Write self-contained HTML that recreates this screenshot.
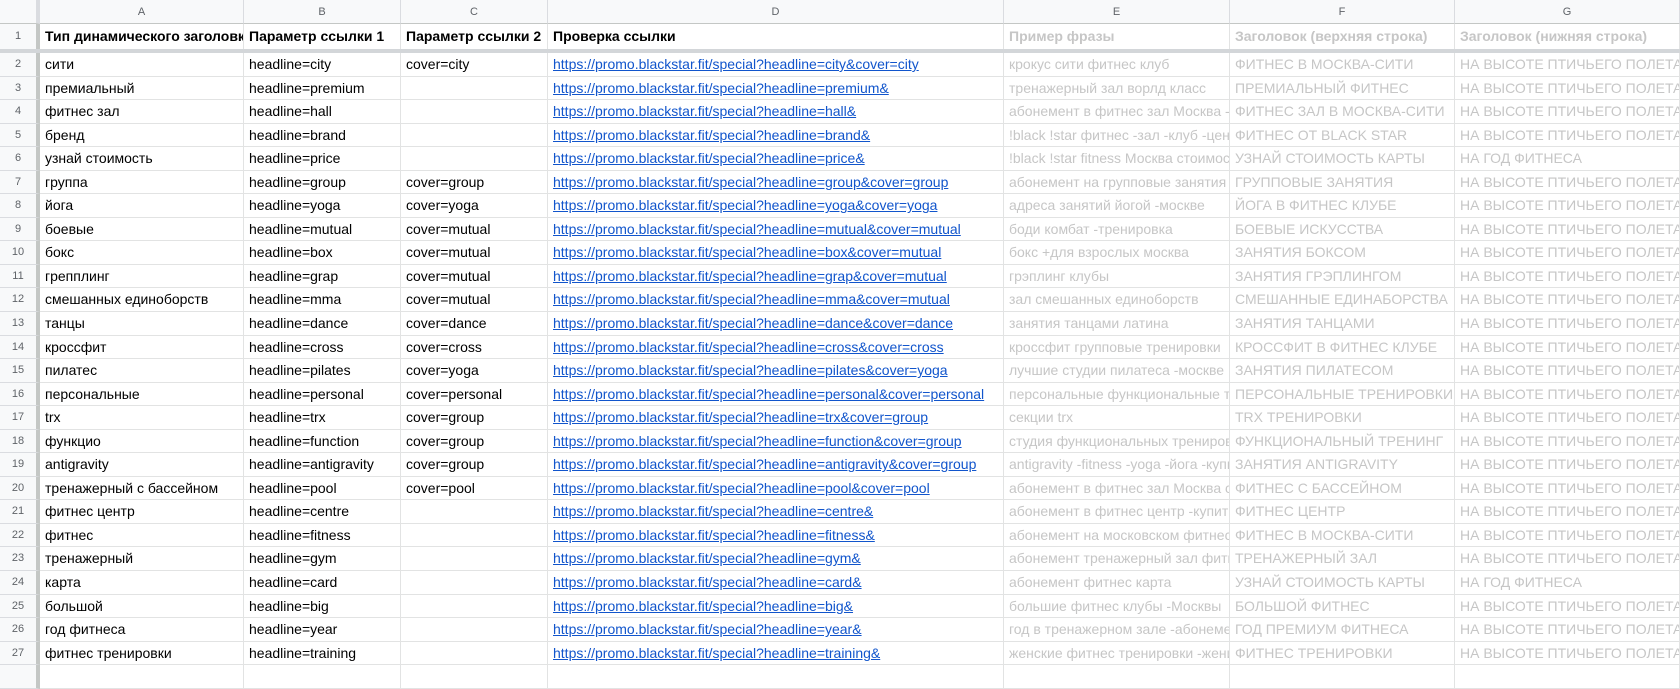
<!DOCTYPE html>
<html><head><meta charset="utf-8"><style>
*{margin:0;padding:0;box-sizing:border-box}
body{width:1680px;height:669px;overflow:hidden;background:#fff;font-family:"Liberation Sans",Arial,sans-serif;font-size:14px;color:#000}
.r{display:flex;height:23.55px;line-height:23px}
.r>div{border-right:1px solid #e2e3e3;border-bottom:1px solid #e2e3e3;white-space:nowrap;overflow:hidden;padding-left:5px;flex:none}
.r>div:nth-child(1){width:40px;padding:0;text-align:center;background:#f8f9fa;color:#5f6368;font-size:11px;border-right:4px solid #c4c7c5;border-bottom-color:#dadce0}
.r>div:nth-child(2){width:204px}
.r>div:nth-child(3){width:157px}
.r>div:nth-child(4){width:147px}
.r>div:nth-child(5){width:456px;color:#1155cc;text-decoration:underline}
.r>div:nth-child(6){width:226px;color:#c6c6c6}
.r>div:nth-child(7){width:225px;color:#c6c6c6}
.r>div:nth-child(8){width:225px;color:#c6c6c6}
.h{height:24px;line-height:24px}
.r.h>div{background:#f8f9fa;color:#5f6368;font-size:11px;text-align:center;padding:0;border-right-color:#dadce0;border-bottom-color:#c4c7c5;text-decoration:none}
.t{height:29px;line-height:25px;font-weight:bold;border-bottom:4px solid #d3d6d9}
.t>div{border-bottom:none}
.t>div:nth-child(1){font-weight:normal}
.r.t>div:nth-child(5){color:#000;text-decoration:none}
</style></head><body>
<div class="r h"><div></div><div>A</div><div>B</div><div>C</div><div>D</div><div>E</div><div>F</div><div>G</div></div>
<div class="r t"><div>1</div><div>Тип динамического заголовка</div><div>Параметр ссылки 1</div><div>Параметр ссылки 2</div><div>Проверка ссылки</div><div>Пример фразы</div><div>Заголовок (верхняя строка)</div><div>Заголовок (нижняя строка)</div></div>
<div class="r"><div>2</div><div>сити</div><div>headline=city</div><div>cover=city</div><div>https://promo.blackstar.fit/special?headline=city&amp;cover=city</div><div>крокус сити фитнес клуб</div><div>ФИТНЕС В МОСКВА-СИТИ</div><div>НА ВЫСОТЕ ПТИЧЬЕГО ПОЛЕТА</div></div>
<div class="r"><div>3</div><div>премиальный</div><div>headline=premium</div><div></div><div>https://promo.blackstar.fit/special?headline=premium&amp;</div><div>тренажерный зал ворлд класс</div><div>ПРЕМИАЛЬНЫЙ ФИТНЕС</div><div>НА ВЫСОТЕ ПТИЧЬЕГО ПОЛЕТА</div></div>
<div class="r"><div>4</div><div>фитнес зал</div><div>headline=hall</div><div></div><div>https://promo.blackstar.fit/special?headline=hall&amp;</div><div>абонемент в фитнес зал Москва -б</div><div>ФИТНЕС ЗАЛ В МОСКВА-СИТИ</div><div>НА ВЫСОТЕ ПТИЧЬЕГО ПОЛЕТА</div></div>
<div class="r"><div>5</div><div>бренд</div><div>headline=brand</div><div></div><div>https://promo.blackstar.fit/special?headline=brand&amp;</div><div>!black !star фитнес -зал -клуб -цент</div><div>ФИТНЕС ОТ BLACK STAR</div><div>НА ВЫСОТЕ ПТИЧЬЕГО ПОЛЕТА</div></div>
<div class="r"><div>6</div><div>узнай стоимость</div><div>headline=price</div><div></div><div>https://promo.blackstar.fit/special?headline=price&amp;</div><div>!black !star fitness Москва стоимост</div><div>УЗНАЙ СТОИМОСТЬ КАРТЫ</div><div>НА ГОД ФИТНЕСА</div></div>
<div class="r"><div>7</div><div>группа</div><div>headline=group</div><div>cover=group</div><div>https://promo.blackstar.fit/special?headline=group&amp;cover=group</div><div>абонемент на групповые занятия ф</div><div>ГРУППОВЫЕ ЗАНЯТИЯ</div><div>НА ВЫСОТЕ ПТИЧЬЕГО ПОЛЕТА</div></div>
<div class="r"><div>8</div><div>йога</div><div>headline=yoga</div><div>cover=yoga</div><div>https://promo.blackstar.fit/special?headline=yoga&amp;cover=yoga</div><div>адреса занятий йогой -москве</div><div>ЙОГА В ФИТНЕС КЛУБЕ</div><div>НА ВЫСОТЕ ПТИЧЬЕГО ПОЛЕТА</div></div>
<div class="r"><div>9</div><div>боевые</div><div>headline=mutual</div><div>cover=mutual</div><div>https://promo.blackstar.fit/special?headline=mutual&amp;cover=mutual</div><div>боди комбат -тренировка</div><div>БОЕВЫЕ ИСКУССТВА</div><div>НА ВЫСОТЕ ПТИЧЬЕГО ПОЛЕТА</div></div>
<div class="r"><div>10</div><div>бокс</div><div>headline=box</div><div>cover=mutual</div><div>https://promo.blackstar.fit/special?headline=box&amp;cover=mutual</div><div>бокс +для взрослых москва</div><div>ЗАНЯТИЯ БОКСОМ</div><div>НА ВЫСОТЕ ПТИЧЬЕГО ПОЛЕТА</div></div>
<div class="r"><div>11</div><div>грепплинг</div><div>headline=grap</div><div>cover=mutual</div><div>https://promo.blackstar.fit/special?headline=grap&amp;cover=mutual</div><div>грэплинг клубы</div><div>ЗАНЯТИЯ ГРЭПЛИНГОМ</div><div>НА ВЫСОТЕ ПТИЧЬЕГО ПОЛЕТА</div></div>
<div class="r"><div>12</div><div>смешанных единоборств</div><div>headline=mma</div><div>cover=mutual</div><div>https://promo.blackstar.fit/special?headline=mma&amp;cover=mutual</div><div>зал смешанных единоборств</div><div>СМЕШАННЫЕ ЕДИНАБОРСТВА</div><div>НА ВЫСОТЕ ПТИЧЬЕГО ПОЛЕТА</div></div>
<div class="r"><div>13</div><div>танцы</div><div>headline=dance</div><div>cover=dance</div><div>https://promo.blackstar.fit/special?headline=dance&amp;cover=dance</div><div>занятия танцами латина</div><div>ЗАНЯТИЯ ТАНЦАМИ</div><div>НА ВЫСОТЕ ПТИЧЬЕГО ПОЛЕТА</div></div>
<div class="r"><div>14</div><div>кроссфит</div><div>headline=cross</div><div>cover=cross</div><div>https://promo.blackstar.fit/special?headline=cross&amp;cover=cross</div><div>кроссфит групповые тренировки</div><div>КРОССФИТ В ФИТНЕС КЛУБЕ</div><div>НА ВЫСОТЕ ПТИЧЬЕГО ПОЛЕТА</div></div>
<div class="r"><div>15</div><div>пилатес</div><div>headline=pilates</div><div>cover=yoga</div><div>https://promo.blackstar.fit/special?headline=pilates&amp;cover=yoga</div><div>лучшие студии пилатеса -москве</div><div>ЗАНЯТИЯ ПИЛАТЕСОМ</div><div>НА ВЫСОТЕ ПТИЧЬЕГО ПОЛЕТА</div></div>
<div class="r"><div>16</div><div>персональные</div><div>headline=personal</div><div>cover=personal</div><div>https://promo.blackstar.fit/special?headline=personal&amp;cover=personal</div><div>персональные функциональные тр</div><div>ПЕРСОНАЛЬНЫЕ ТРЕНИРОВКИ</div><div>НА ВЫСОТЕ ПТИЧЬЕГО ПОЛЕТА</div></div>
<div class="r"><div>17</div><div>trx</div><div>headline=trx</div><div>cover=group</div><div>https://promo.blackstar.fit/special?headline=trx&amp;cover=group</div><div>секции trx</div><div>TRX ТРЕНИРОВКИ</div><div>НА ВЫСОТЕ ПТИЧЬЕГО ПОЛЕТА</div></div>
<div class="r"><div>18</div><div>функцио</div><div>headline=function</div><div>cover=group</div><div>https://promo.blackstar.fit/special?headline=function&amp;cover=group</div><div>студия функциональных трениров</div><div>ФУНКЦИОНАЛЬНЫЙ ТРЕНИНГ</div><div>НА ВЫСОТЕ ПТИЧЬЕГО ПОЛЕТА</div></div>
<div class="r"><div>19</div><div>antigravity</div><div>headline=antigravity</div><div>cover=group</div><div>https://promo.blackstar.fit/special?headline=antigravity&amp;cover=group</div><div>antigravity -fitness -yoga -йога -купи</div><div>ЗАНЯТИЯ ANTIGRAVITY</div><div>НА ВЫСОТЕ ПТИЧЬЕГО ПОЛЕТА</div></div>
<div class="r"><div>20</div><div>тренажерный с бассейном</div><div>headline=pool</div><div>cover=pool</div><div>https://promo.blackstar.fit/special?headline=pool&amp;cover=pool</div><div>абонемент в фитнес зал Москва с б</div><div>ФИТНЕС С БАССЕЙНОМ</div><div>НА ВЫСОТЕ ПТИЧЬЕГО ПОЛЕТА</div></div>
<div class="r"><div>21</div><div>фитнес центр</div><div>headline=centre</div><div></div><div>https://promo.blackstar.fit/special?headline=centre&amp;</div><div>абонемент в фитнес центр -купить</div><div>ФИТНЕС ЦЕНТР</div><div>НА ВЫСОТЕ ПТИЧЬЕГО ПОЛЕТА</div></div>
<div class="r"><div>22</div><div>фитнес</div><div>headline=fitness</div><div></div><div>https://promo.blackstar.fit/special?headline=fitness&amp;</div><div>абонемент на московском фитнес</div><div>ФИТНЕС В МОСКВА-СИТИ</div><div>НА ВЫСОТЕ ПТИЧЬЕГО ПОЛЕТА</div></div>
<div class="r"><div>23</div><div>тренажерный</div><div>headline=gym</div><div></div><div>https://promo.blackstar.fit/special?headline=gym&amp;</div><div>абонемент тренажерный зал фитн</div><div>ТРЕНАЖЕРНЫЙ ЗАЛ</div><div>НА ВЫСОТЕ ПТИЧЬЕГО ПОЛЕТА</div></div>
<div class="r"><div>24</div><div>карта</div><div>headline=card</div><div></div><div>https://promo.blackstar.fit/special?headline=card&amp;</div><div>абонемент фитнес карта</div><div>УЗНАЙ СТОИМОСТЬ КАРТЫ</div><div>НА ГОД ФИТНЕСА</div></div>
<div class="r"><div>25</div><div>большой</div><div>headline=big</div><div></div><div>https://promo.blackstar.fit/special?headline=big&amp;</div><div>большие фитнес клубы -Москвы</div><div>БОЛЬШОЙ ФИТНЕС</div><div>НА ВЫСОТЕ ПТИЧЬЕГО ПОЛЕТА</div></div>
<div class="r"><div>26</div><div>год фитнеса</div><div>headline=year</div><div></div><div>https://promo.blackstar.fit/special?headline=year&amp;</div><div>год в тренажерном зале -абонемен</div><div>ГОД ПРЕМИУМ ФИТНЕСА</div><div>НА ВЫСОТЕ ПТИЧЬЕГО ПОЛЕТА</div></div>
<div class="r"><div>27</div><div>фитнес тренировки</div><div>headline=training</div><div></div><div>https://promo.blackstar.fit/special?headline=training&amp;</div><div>женские фитнес тренировки -жени</div><div>ФИТНЕС ТРЕНИРОВКИ</div><div>НА ВЫСОТЕ ПТИЧЬЕГО ПОЛЕТА</div></div>
<div class="r"><div></div><div></div><div></div><div></div><div></div><div></div><div></div><div></div></div>
</body></html>
